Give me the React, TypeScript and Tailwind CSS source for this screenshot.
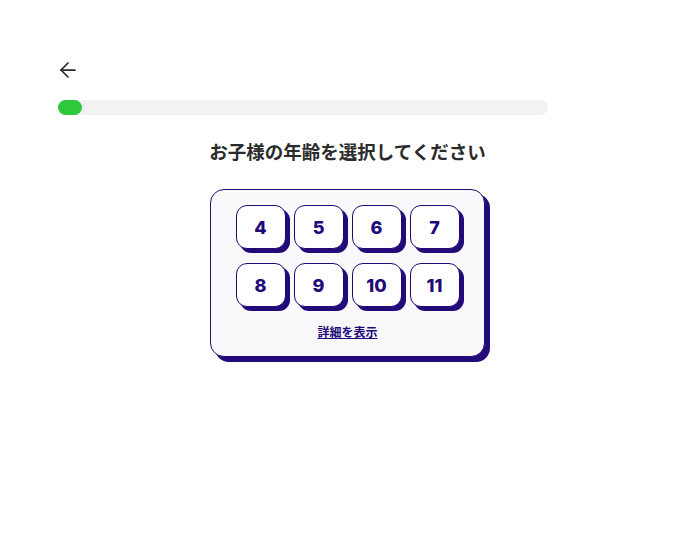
import React from "react";
import { ArrowLeft } from "lucide-react";

const ages = [4, 5, 6, 7, 8, 9, 10, 11];

export default function App() {
  return (
    <div className="min-h-screen w-full bg-white" style={{ fontFamily: '"Noto Sans", "Noto Sans CJK JP", sans-serif' }}>
      <div className="ml-[58px] flex w-[579px] flex-col items-center pt-[58px]">
        <button className="-ml-[2px] self-start text-[#2a2a2a]">
          <ArrowLeft size={24} strokeWidth={1.75} />
        </button>
        <div className="mt-[18px] h-[15px] w-[490px] self-start rounded-full bg-[#f2f2f2]">
          <div className="h-full w-[24px] rounded-full bg-[#2ec83c]" />
        </div>
        <h1
          className="mt-[22px] text-[18.5px] font-bold leading-[28px] text-[#2b2b2b]"
          style={{ fontFamily: '"Noto Sans CJK JP", sans-serif' }}
        >
          お子様の年齢を選択してください
        </h1>
        <div className="mt-[24px] flex w-[275px] flex-col items-center rounded-[14px] border-[1.5px] border-[#220a78] bg-[#f9f9fb] pb-[16px] pt-[15px] shadow-[5px_5px_0_#220a78]">
          <div className="grid grid-cols-4 gap-x-[8px] gap-y-[14px]">
            {ages.map((a) => (
              <button
                key={a}
                className="flex h-[44px] w-[50px] items-center justify-center rounded-[11px] border-[1.5px] border-[#220a78] bg-white text-[18px] font-extrabold text-[#220a78] shadow-[4px_4px_0_#220a78]"
                style={{ fontFamily: "Inter, sans-serif" }}
              >
                {a}
              </button>
            ))}
          </div>
          <a
            href="#"
            className="mt-[17px] text-[12px] font-bold leading-[16px] text-[#220a78] underline"
            style={{ fontFamily: '"Noto Sans CJK JP", sans-serif' }}
          >
            詳細を表示
          </a>
        </div>
      </div>
    </div>
  );
}
